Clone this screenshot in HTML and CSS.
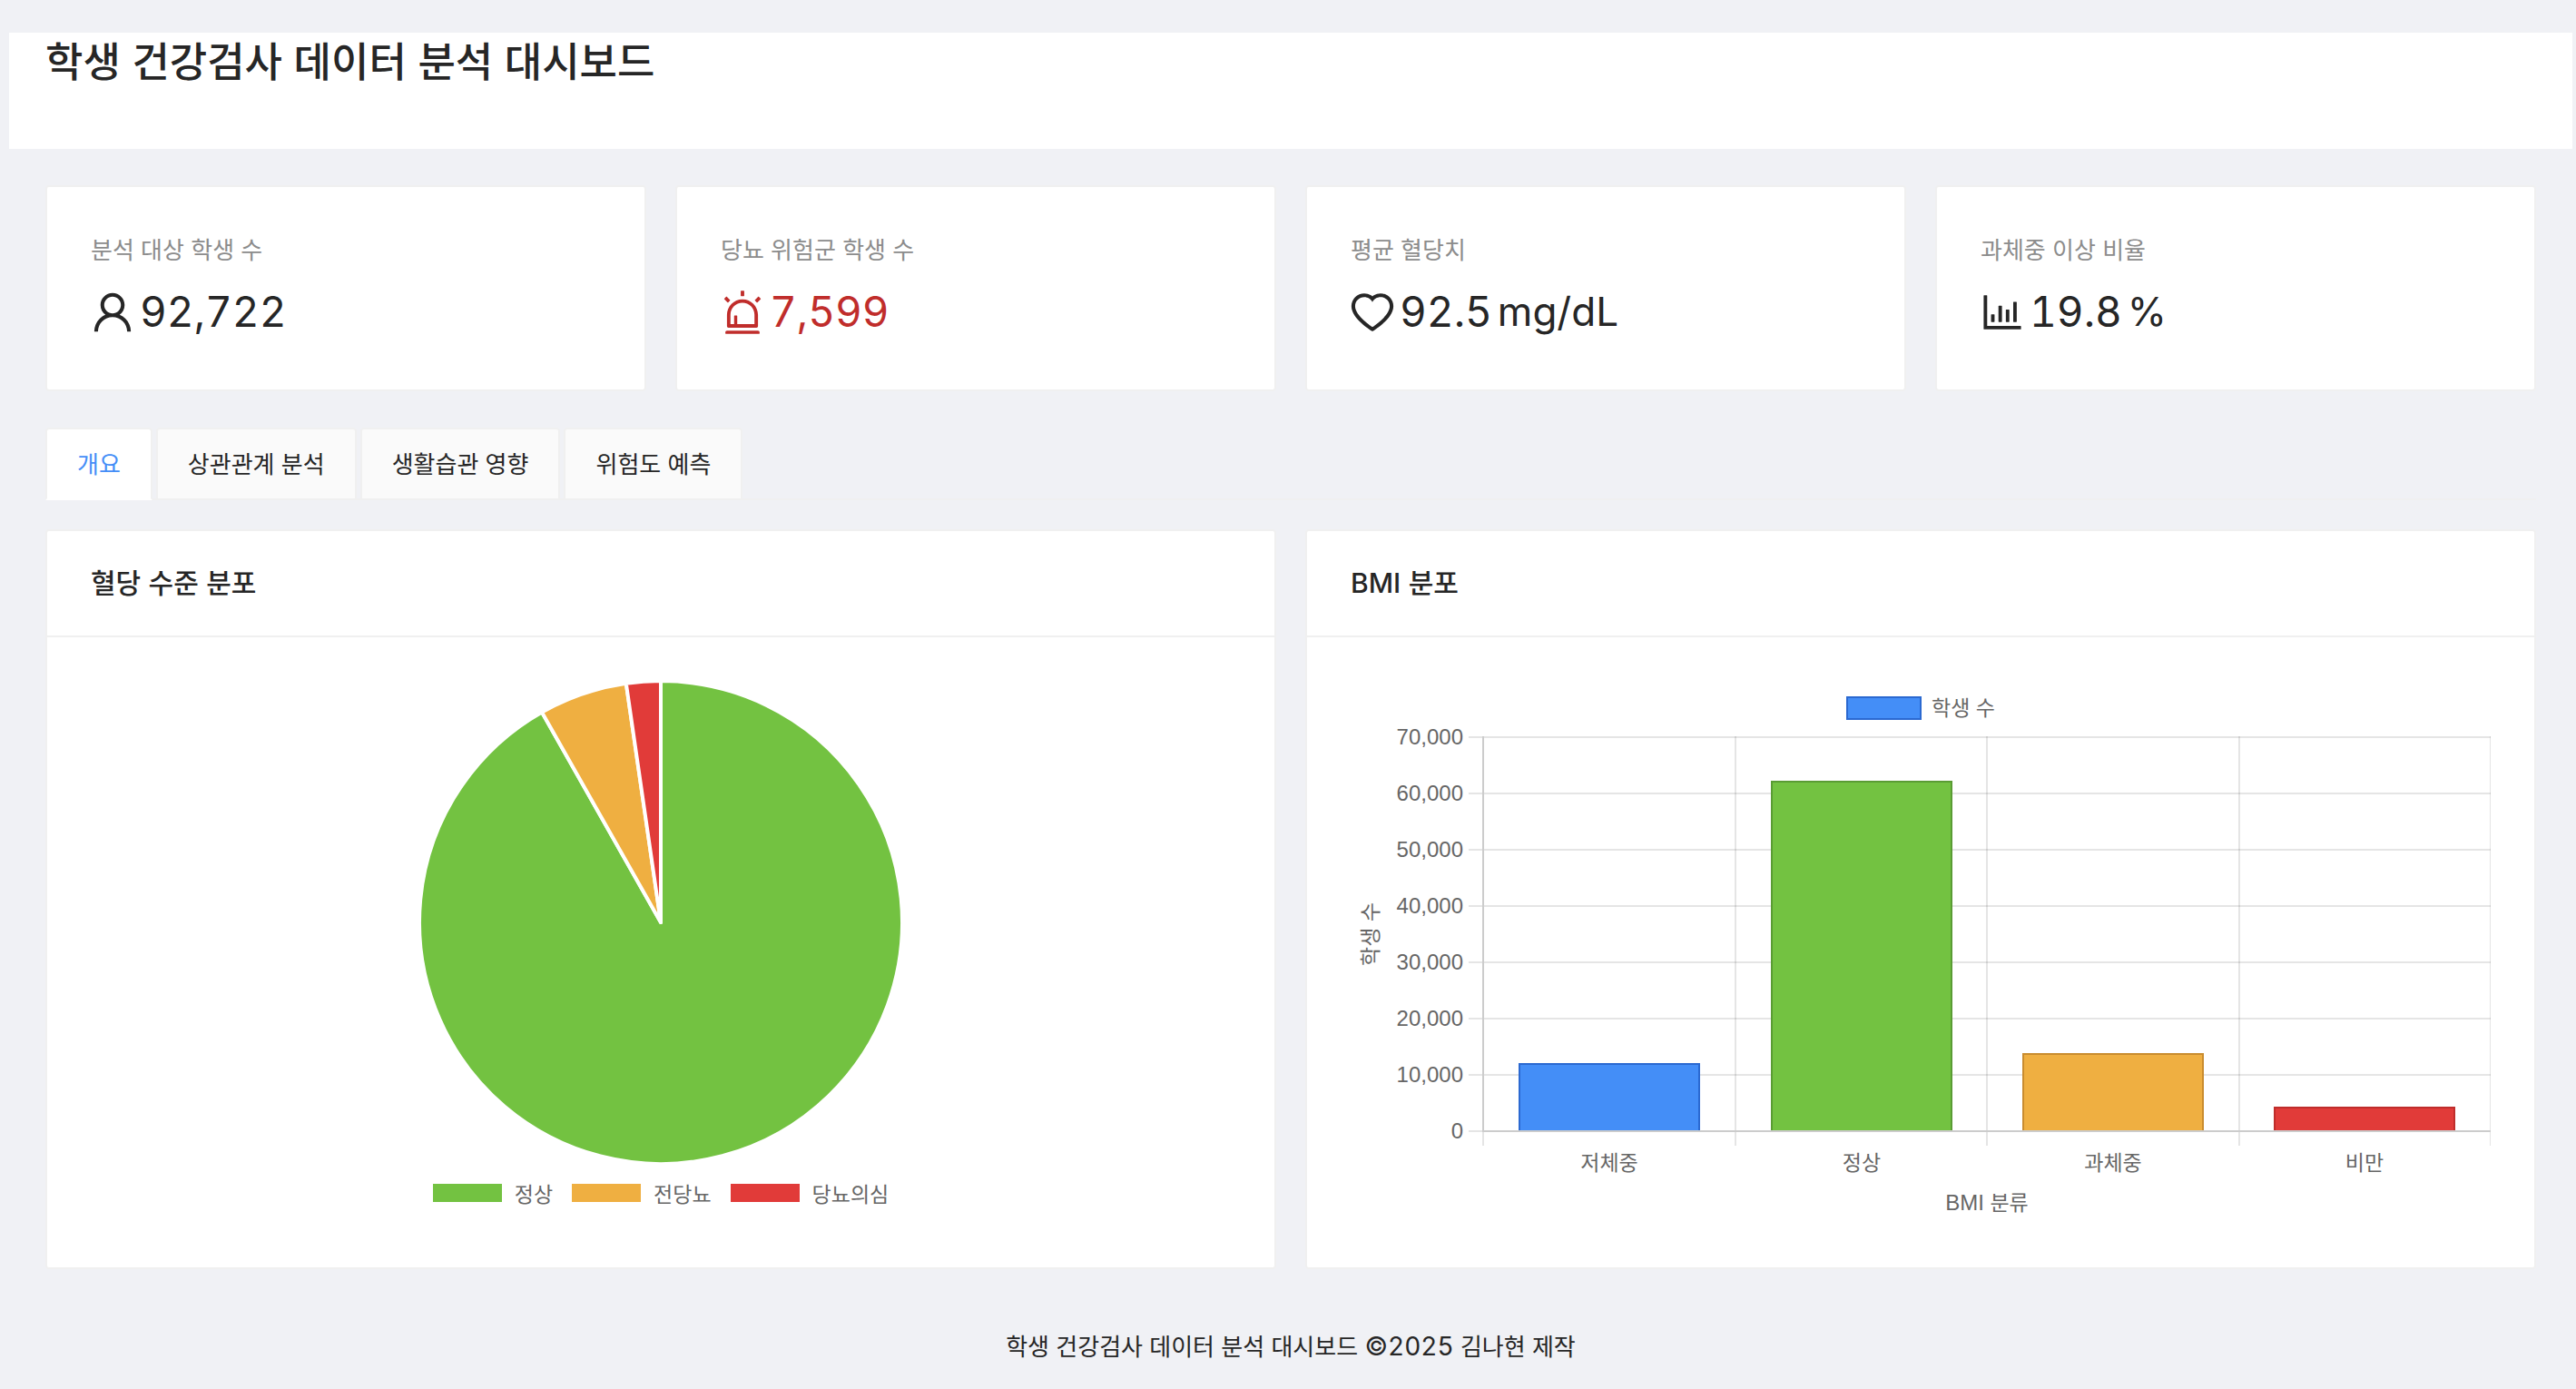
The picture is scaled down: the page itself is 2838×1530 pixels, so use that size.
FILE: index.html
```html
<!DOCTYPE html>
<html lang="ko">
<head>
<meta charset="utf-8">
<meta name="viewport" content="width=device-width, initial-scale=1">
<title>학생 건강검사 데이터 분석 대시보드</title>
<link rel="stylesheet" href="styles.css">
</head>
<body>
<div class="layout">
  <header class="header">
    <h1 class="header-title">학생 건강검사 데이터 분석 대시보드</h1>
  </header>

  <main class="content">
    <section class="stats">
      <article class="card stat">
        <h2 class="stat-label">분석 대상 학생 수</h2>
        <p class="stat-value">
          <svg class="icon" viewBox="64 64 896 896" aria-hidden="true"><path d="M858.5 763.6a374 374 0 00-80.6-119.5 375.63 375.63 0 00-119.5-80.6c-.4-.2-.8-.3-1.2-.5C719.5 518 760 444.7 760 362c0-137-111-248-248-248S264 225 264 362c0 82.700 40.500 156 102.800 201.100-.4.2-.8.3-1.2.5-44.800 18.900-85 46-119.500 80.600a375.630 375.630 0 00-80.600 119.500A371.700 371.700 0 00136 901.800a8 8 0 008 8.200h60c4.400 0 7.900-3.500 8-7.800 2-77.200 33-149.500 87.800-204.300 56.700-56.700 132-87.900 212.200-87.900s155.500 31.200 212.200 87.900C779 752.700 810 825 812 902.200c.1 4.400 3.600 7.800 8 7.800h60a8 8 0 008-8.200c-1-47.800-10.900-94.300-29.500-138.200zM512 534c-45.900 0-89.100-17.900-121.600-50.400S340 407.900 340 362c0-45.900 17.900-89.100 50.400-121.600S466.100 190 512 190s89.100 17.900 121.600 50.400S684 316.100 684 362c0 45.900-17.900 89.100-50.400 121.600S557.900 534 512 534z"/></svg>
          <span>92,722</span>
        </p>
      </article>
      <article class="card stat">
        <h2 class="stat-label">당뇨 위험군 학생 수</h2>
        <p class="stat-value stat-value-danger">
          <svg class="icon" viewBox="64 64 896 896" aria-hidden="true"><path d="M193 796c0 17.700 14.300 32 32 32h574c17.700 0 32-14.300 32-32V563c0-176.200-142.800-319-319-319S193 386.800 193 563v233zm72-233c0-136.400 110.600-247 247-247s247 110.600 247 247v193H404V585c0-5.500-4.500-10-10-10h-44c-5.500 0-10 4.500-10 10v171h-75V563zm-48.100-252.500l39.600-39.600c3.100-3.100 3.100-8.200 0-11.300l-67.900-67.900a8.030 8.030 0 00-11.300 0l-39.600 39.600a8.030 8.030 0 000 11.300l67.900 67.900c3.100 3.100 8.100 3.100 11.300 0zm669.600-79.200l-39.600-39.600a8.030 8.030 0 00-11.300 0l-67.900 67.900a8.030 8.030 0 000 11.300l39.600 39.600c3.100 3.100 8.200 3.100 11.300 0l67.900-67.900c3.100-3.200 3.100-8.200 0-11.300zM832 892H192c-17.700 0-32 14.300-32 32v24c0 4.400 3.600 8 8 8h688c4.400 0 8-3.600 8-8v-24c0-17.700-14.300-32-32-32zM484 180h56c4.400 0 8-3.600 8-8V76c0-4.400-3.600-8-8-8h-56c-4.400 0-8 3.600-8 8v96c0 4.400 3.600 8 8 8z"/></svg>
          <span>7,599</span>
        </p>
      </article>
      <article class="card stat">
        <h2 class="stat-label">평균 혈당치</h2>
        <p class="stat-value">
          <svg class="icon" viewBox="64 64 896 896" aria-hidden="true"><path d="M923 283.600a260.040 260.040 0 00-56.900-82.800 264.400 264.400 0 00-84-55.500A265.340 265.340 0 00679.700 125c-49.300 0-97.400 13.500-139.200 39-10 6.100-19.500 12.800-28.500 20.100-9-7.300-18.500-14-28.500-20.100-41.800-25.500-89.900-39-139.200-39-35.500 0-69.900 6.800-102.400 20.300-31.400 13-59.700 31.700-84 55.500a258.440 258.440 0 00-56.900 82.800c-13.900 32.300-21 66.600-21 101.900 0 33.300 6.800 68 20.300 103.300 11.300 29.500 27.500 60.100 48.200 91 32.800 48.900 77.900 99.900 133.900 151.600 92.800 85.700 184.700 144.900 188.600 147.300l23.700 15.200c10.500 6.700 24 6.700 34.500 0l23.700-15.200c3.900-2.500 95.700-61.600 188.600-147.300 56-51.700 101.100-102.700 133.900-151.600 20.700-30.900 37-61.500 48.200-91 13.500-35.300 20.300-70 20.300-103.300.1-35.300-7-69.600-20.900-101.900zM512 814.800S156 586.700 156 385.500C156 283.600 240.300 201 344.300 201c73.100 0 136.500 40.800 167.700 100.400C543.200 241.800 606.600 201 679.700 201c104 0 188.300 82.600 188.300 184.500 0 201.200-356 429.300-356 429.300z"/></svg>
          <span>92.5</span><span class="stat-unit">mg/dL</span>
        </p>
      </article>
      <article class="card stat">
        <h2 class="stat-label">과체중 이상 비율</h2>
        <p class="stat-value">
          <svg class="icon" viewBox="64 64 896 896" aria-hidden="true"><path d="M888 792H200V168c0-4.400-3.600-8-8-8h-56c-4.400 0-8 3.600-8 8v688c0 4.400 3.600 8 8 8h752c4.400 0 8-3.600 8-8v-56c0-4.400-3.600-8-8-8zm-600-80h56c4.400 0 8-3.600 8-8V560c0-4.400-3.600-8-8-8h-56c-4.400 0-8 3.600-8 8v144c0 4.400 3.600 8 8 8zm152 0h56c4.400 0 8-3.600 8-8V384c0-4.400-3.600-8-8-8h-56c-4.400 0-8 3.600-8 8v320c0 4.400 3.600 8 8 8zm152 0h56c4.400 0 8-3.600 8-8V462c0-4.400-3.600-8-8-8h-56c-4.400 0-8 3.600-8 8v242c0 4.400 3.600 8 8 8zm152 0h56c4.400 0 8-3.600 8-8V304c0-4.400-3.600-8-8-8h-56c-4.400 0-8 3.600-8 8v400c0 4.400 3.600 8 8 8z"/></svg>
          <span>19.8</span><span class="stat-unit">%</span>
        </p>
      </article>
    </section>

    <div class="tabs" role="tablist">
      <button type="button" class="tab tab-active" role="tab" aria-selected="true">개요</button>
      <button type="button" class="tab" role="tab" aria-selected="false">상관관계 분석</button>
      <button type="button" class="tab" role="tab" aria-selected="false">생활습관 영향</button>
      <button type="button" class="tab" role="tab" aria-selected="false">위험도 예측</button>
    </div>

    <section class="panels">
      <article class="card panel">
        <h2 class="panel-title">혈당 수준 분포</h2>
        <div class="panel-body pie-chart">
          <svg class="pie" viewBox="-266 -266 532 532" role="img" aria-label="혈당 수준 분포">
            <g stroke="#fff" stroke-width="4" stroke-linejoin="round">
              <path fill="#73c241" d="M0 0V-266A266 266 0 1 1 -131 -231.500Z"/>
              <path fill="#efaf41" d="M0 0L-131 -231.500A266 266 0 0 1 -38.200 -263.200Z"/>
              <path fill="#e13b39" d="M0 0L-38.200 -263.200A266 266 0 0 1 0 -266Z"/>
            </g>
          </svg>
          <ul class="legend">
            <li class="legend-item"><span class="swatch swatch-green"></span>정상</li>
            <li class="legend-item"><span class="swatch swatch-orange"></span>전당뇨</li>
            <li class="legend-item"><span class="swatch swatch-red"></span>당뇨의심</li>
          </ul>
        </div>
      </article>

      <article class="card panel">
        <h2 class="panel-title"><span class="latin">BMI</span> 분포</h2>
        <div class="panel-body">
          <svg class="bars" viewBox="0 0 1256 598" role="img" aria-label="BMI 분포">
            <rect x="547" y="18" width="81" height="24" fill="#448ef7" stroke="#2b69d1" stroke-width="2"/>
            <text x="640" y="38">학생 수</text>

            <g stroke="#000" stroke-opacity=".1" stroke-width="2">
              <path d="M130 62H1256"/>
              <path d="M130 124H1256"/>
              <path d="M130 186H1256"/>
              <path d="M130 248H1256"/>
              <path d="M130 310H1256"/>
              <path d="M130 372H1256"/>
              <path d="M130 434H1256"/>
              <path d="M130 496H1256"/>
              <path d="M146 61V512"/>
              <path d="M424 61V512"/>
              <path d="M701 61V512"/>
              <path d="M979 61V512"/>
              <path d="M1256 61V512"/>
            </g>

            <g stroke-width="2">
              <path fill="#448ef7" stroke="#2b69d1" d="M186 496V422H384V496"/>
              <path fill="#73c241" stroke="#5a9c34" d="M464 496V111H662V496"/>
              <path fill="#efaf41" stroke="#c98c2f" d="M741 496V411H939V496"/>
              <path fill="#e13b39" stroke="#bf2d2b" d="M1018 496V470H1216V496"/>
              <path fill="none" stroke="#ccc" d="M146 61V496H1256"/>
            </g>

            <g class="ticks" text-anchor="end">
              <text x="124" y="70">70,000</text>
              <text x="124" y="132">60,000</text>
              <text x="124" y="194">50,000</text>
              <text x="124" y="256">40,000</text>
              <text x="124" y="318">30,000</text>
              <text x="124" y="380">20,000</text>
              <text x="124" y="442">10,000</text>
              <text x="124" y="504">0</text>
            </g>
            <g text-anchor="middle">
              <text x="285" y="539">저체중</text>
              <text x="563" y="539">정상</text>
              <text x="840" y="539">과체중</text>
              <text x="1117" y="539">비만</text>
              <text x="701" y="583"><tspan class="ticks">BMI</tspan> 분류</text>
              <text transform="translate(30 279) rotate(-90)">학생 수</text>
            </g>
          </svg>
        </div>
      </article>
    </section>
  </main>

  <footer class="footer">학생 건강검사 데이터 분석 대시보드 <span class="latin footer-year">©2025</span> 김나현 제작</footer>
</div>
</body>
</html>
```
FILE: styles.css
```css
* {
  box-sizing: border-box;
}

body {
  margin: 0;
  background: #f0f1f5;
  color: #262626;
  font-family: "Noto Sans CJK KR", sans-serif;
  font-size: 26px;
  line-height: 44px;
}

h1,
h2,
p,
ul {
  margin: 0;
  padding: 0;
}

.latin {
  font-family: Inter, sans-serif;
  font-variant-numeric: tabular-nums;
  line-height: 1;
}

.layout {
  padding: 36px 4px 0 10px;
}

.header {
  height: 128px;
  padding: 0 40px;
  background: #fff;
}

.header-title {
  font-size: 45px;
  font-weight: 500;
  line-height: 60px;
}

.content {
  padding: 40px 40px 0;
}

.card {
  border: 2px solid #f0f0f0;
  border-radius: 4px;
  background: #fff;
}

/* Summary figures */

.stats {
  display: grid;
  grid-template-columns: repeat(4, 1fr);
  gap: 32px;
}

.stat {
  padding: 46px 48px 48px;
}

.stat-label {
  margin-bottom: 10px;
  color: #8c8c8c;
  font-size: 26px;
  font-weight: 400;
}

.stat-value {
  display: flex;
  align-items: center;
  gap: 6px;
  font-family: Inter, sans-serif;
  font-size: 46px;
  font-variant-numeric: tabular-nums;
  line-height: 75px;
}

.stat-value-danger {
  color: #c02d2b;
}

.stat-unit {
  font-size: 44px;
}

.icon {
  width: 48px;
  height: 48px;
  fill: currentColor;
}

/* Tabs */

.tabs {
  display: flex;
  gap: 4px;
  height: 80px;
  margin: 40px 0 32px;
  border-bottom: 2px solid #f0f0f0;
}

.tab {
  height: 80px;
  padding: 0 33px 3px;
  border: 2px solid #f0f0f0;
  border-radius: 4px 4px 0 0;
  background: #fafafa;
  color: #262626;
  font: inherit;
  cursor: pointer;
}

.tab-active {
  border-bottom-color: #fff;
  background: #fff;
  color: #448ef7;
}

/* Chart panels */

.panels {
  display: grid;
  grid-template-columns: repeat(2, 1fr);
  gap: 32px;
}

.panel-title {
  padding: 33px 48px 38px;
  border-bottom: 2px solid #f0f0f0;
  font-size: 30px;
  font-weight: 500;
}

.panel-body {
  padding: 48px;
}

.pie-chart {
  display: flex;
  flex-direction: column;
  align-items: center;
}

.pie {
  width: 532px;
  max-width: 100%;
}

.legend {
  display: flex;
  gap: 21px;
  margin-top: 10px;
  color: #666;
  font-size: 23px;
  list-style: none;
}

.legend-item {
  display: flex;
  align-items: center;
  gap: 14px;
}

.swatch {
  width: 76px;
  height: 20px;
}

.swatch-green {
  background: #73c241;
}

.swatch-orange {
  background: #efaf41;
}

.swatch-red {
  background: #e13b39;
}

.bars {
  display: block;
  width: 100%;
  fill: #666;
  font-size: 23px;
}

.ticks {
  font-family: "Liberation Sans", sans-serif;
  font-size: 24px;
}

.footer {
  padding: 62px 40px 22px;
  text-align: center;
}

.footer-year {
  font-size: 28px;
}
```
